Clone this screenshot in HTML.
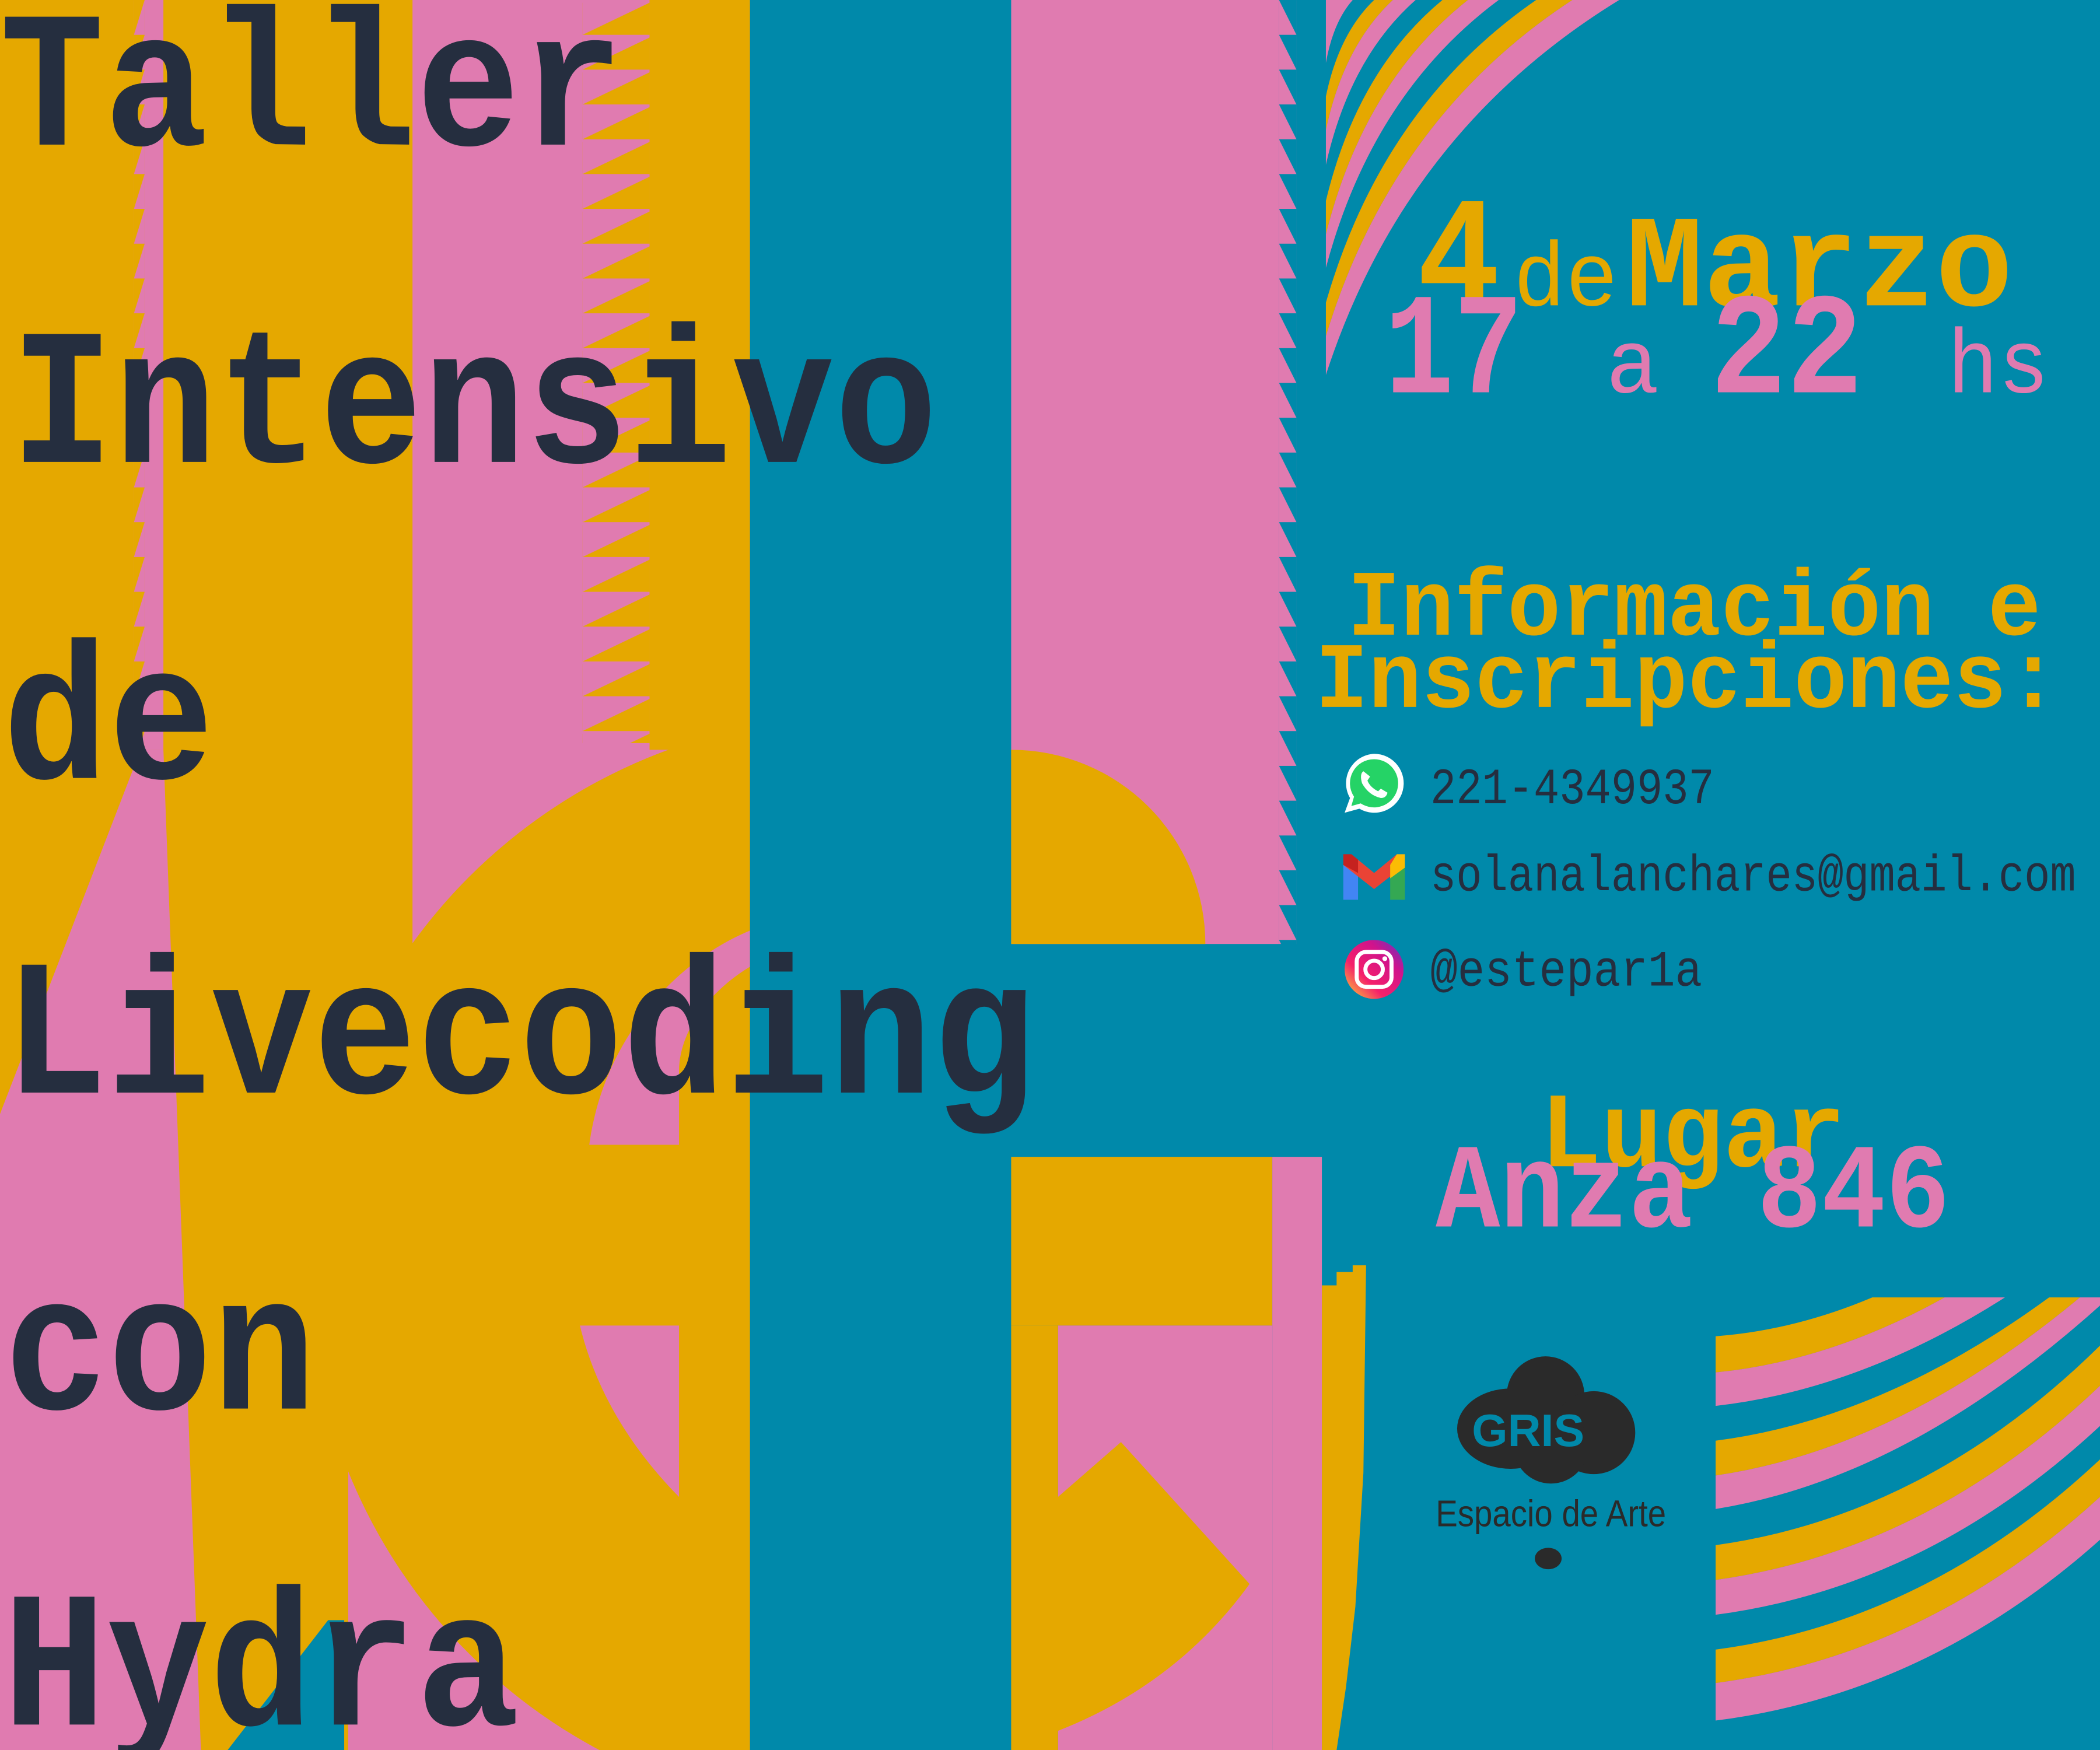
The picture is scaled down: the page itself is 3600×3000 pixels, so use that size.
<!DOCTYPE html>
<html><head><meta charset="utf-8"><style>
html,body{margin:0;padding:0;background:#0089aa;}
svg{display:block;}
text{font-family:"Liberation Mono",monospace;}
</style></head><body>
<svg width="3600" height="3000" viewBox="0 0 1568 1307" preserveAspectRatio="none" xmlns="http://www.w3.org/2000/svg">
<defs>
<pattern id="tY" x="435" y="0" width="50" height="26" patternUnits="userSpaceOnUse"><polygon points="50,2 0,26 50,26" fill="#e5a800"/></pattern>
<pattern id="tP" x="955" y="0" width="13" height="26" patternUnits="userSpaceOnUse"><polygon points="0,0 13,26 0,26" fill="#e07bb0"/></pattern>
<pattern id="tL" x="100" y="0" width="8" height="26" patternUnits="userSpaceOnUse"><polygon points="8,0 0,26 8,26" fill="#e07bb0"/></pattern>
<clipPath id="cl"><rect x="0" y="0" width="560" height="1307"/></clipPath>
<linearGradient id="ig" x1="0" y1="1" x2="1" y2="0"><stop offset="0" stop-color="#fdd835"/><stop offset="0.35" stop-color="#f5206a"/><stop offset="0.7" stop-color="#d0138c"/><stop offset="1" stop-color="#5b3ac7"/></linearGradient>
</defs>
<rect x="0" y="0" width="1568" height="1307" fill="#0089aa"/>
<rect x="0" y="0" width="560" height="1307" fill="#e5a800"/>
<rect x="308" y="0" width="252" height="760" fill="#e07bb0"/>
<rect x="435" y="0" width="50" height="555" fill="url(#tY)"/>
<rect x="485" y="0" width="75" height="560" fill="#e5a800"/>
<rect x="108" y="0" width="14" height="560" fill="#e07bb0"/>
<rect x="100" y="0" width="8" height="560" fill="url(#tL)"/>
<polygon points="105,560 122,560 150,1307 0,1307 0,832" fill="#e07bb0"/>
<rect x="260" y="1000" width="300" height="307" fill="#e07bb0"/>
<g clip-path="url(#cl)">
<circle cx="640" cy="945" r="410" fill="#e5a800"/>
</g>
<path d="M433,990 L507,990 L507,1118 Q450,1060 433,990 Z" fill="#e07bb0"/>
<path d="M440,855 C450,780 500,720 560,695 L560,722 C530,740 507,770 507,800 L507,855 Z" fill="#e07bb0"/>
<polygon points="170,1307 245,1210 257,1210 257,1307" fill="#0089aa"/>
<rect x="560" y="0" width="195" height="1307" fill="#0089aa"/>
<rect x="755" y="0" width="200" height="705" fill="#e07bb0"/>
<rect x="955" y="0" width="13" height="705" fill="url(#tP)"/>
<path d="M755,560 A145,145 0 0 1 900,705 L755,705 Z" fill="#e5a800"/>
<rect x="755" y="864" width="195" height="126" fill="#e5a800"/>
<rect x="950" y="864" width="37" height="443" fill="#e07bb0"/>
<rect x="790" y="990" width="160" height="317" fill="#e07bb0"/>
<rect x="755" y="990" width="35" height="317" fill="#e5a800"/>
<path d="M790,1118 L837,1077 L933,1183 Q870,1270 760,1303 L760,1118 Z" fill="#e5a800"/>
<polygon points="987,960 998,960 998,950 1010,950 1010,945 1020,945 1018,1100 1012,1200 1005,1260 998,1307 987,1307" fill="#e5a800"/>
<path d="M990,0 L1010,0 Q995.4,16.5 990,47 Z" fill="#e07bb0"/>
<path d="M1026,0 L1040,0 Q1003.5,34 990,97 L990,72 Q999.7,25.2 1026,0 Z" fill="#e5a800"/>
<path d="M1040,0 L1057,0 Q1008.1,43 990,123 L990,97 Q1003.5,34 1040,0 Z" fill="#e07bb0"/>
<path d="M1077,0 L1096,0 Q1018.6,61.3 990,175 L990,150 Q1013.5,52.5 1077,0 Z" fill="#e5a800"/>
<path d="M1096,0 L1119,0 Q1024.8,70 990,200 L990,175 Q1018.6,61.3 1096,0 Z" fill="#e07bb0"/>
<path d="M1147,0 L1174,0 Q1039.7,87.9 990,251 L990,226 Q1032.4,79.1 1147,0 Z" fill="#e5a800"/>
<path d="M1174,0 L1209,0 Q1049.1,98 990,280 L990,251 Q1039.7,87.9 1174,0 Z" fill="#e07bb0"/>
<path d="M1281,998 Q1339.5,993.6 1398,969 L1452,969 Q1366.5,1016.6 1281,1025 Z" fill="#e5a800"/>
<path d="M1281,1025 Q1366.5,1016.6 1452,969 L1497,969 Q1389,1037.8 1281,1050 Z" fill="#e07bb0"/>
<path d="M1281,1076 Q1405.5,1060 1530,969 L1553,969 Q1417,1082 1281,1102 Z" fill="#e5a800"/>
<path d="M1281,1102 Q1417,1082 1553,969 L1568,969 L1568,975 Q1424.5,1104 1281,1127 Z" fill="#e07bb0"/>
<path d="M1281,1154 Q1439,1132 1568,1005 L1568,1035 Q1439,1158 1281,1180 Z" fill="#e5a800"/>
<path d="M1281,1180 Q1439,1158 1568,1035 L1568,1065 Q1439,1185 1281,1206 Z" fill="#e07bb0"/>
<path d="M1281,1232 Q1439,1211 1568,1090 L1568,1118 Q1439,1236 1281,1257 Z" fill="#e5a800"/>
<path d="M1281,1257 Q1439,1236 1568,1118 L1568,1150 Q1439,1265 1281,1285 Z" fill="#e07bb0"/>
<g fill="#252e3f" font-weight="bold" font-size="145">
<text x="0" y="108" textLength="466" lengthAdjust="spacingAndGlyphs">Taller</text>
<text x="8" y="345" textLength="692" lengthAdjust="spacingAndGlyphs">Intensivo</text>
<text x="2" y="581" textLength="158" lengthAdjust="spacingAndGlyphs">de</text>
<text x="3" y="816" textLength="770" lengthAdjust="spacingAndGlyphs">Livecoding</text>
<text x="3" y="1052" textLength="233" lengthAdjust="spacingAndGlyphs">con</text>
<text x="2" y="1288" textLength="386" lengthAdjust="spacingAndGlyphs">Hydra</text>
</g>
<g fill="#e5a800">
<text x="1058" y="228" font-size="118" font-weight="bold" textLength="62" lengthAdjust="spacingAndGlyphs">4</text>
<text x="1130" y="228" font-size="68" textLength="78" lengthAdjust="spacingAndGlyphs">de</text>
<text x="1214" y="228" font-size="98" font-weight="bold" textLength="289" lengthAdjust="spacingAndGlyphs">Marzo</text>
</g>
<g fill="#e07bb0">
<text x="1034" y="293" font-size="108" font-weight="bold" textLength="103" lengthAdjust="spacingAndGlyphs">17</text>
<text x="1199" y="293" font-size="68" textLength="40" lengthAdjust="spacingAndGlyphs">a</text>
<text x="1277" y="293" font-size="108" font-weight="bold" textLength="114" lengthAdjust="spacingAndGlyphs">22</text>
<text x="1454" y="293" font-size="68" textLength="76" lengthAdjust="spacingAndGlyphs">hs</text>
</g>
<g fill="#e5a800" font-weight="bold" font-size="70">
<text x="1006" y="474" textLength="518" lengthAdjust="spacingAndGlyphs">Información e</text>
<text x="982" y="528" textLength="556" lengthAdjust="spacingAndGlyphs">Inscripciones:</text>
</g>
<g fill="#252e3f" font-size="38">
<text x="1068" y="600" textLength="212" lengthAdjust="spacingAndGlyphs">221-4349937</text>
<text x="1068" y="665" textLength="482" lengthAdjust="spacingAndGlyphs">solanalanchares@gmail.com</text>
<text x="1068" y="736" textLength="203" lengthAdjust="spacingAndGlyphs">@estepar1a</text>
</g>
<path d="M1026,563 A22,22 0 1 1 1015,604 L1004,607 L1008,596 A22,22 0 0 1 1026,563 Z" fill="#fff"/>
<path d="M1026,567 A18,18 0 1 1 1016,600 L1009,602 L1011,595 A18,18 0 0 1 1026,567 Z" fill="#25d366"/>
<path d="M1018,576 Q1015,578 1017,585 Q1022,594 1031,596 Q1035,596 1036,592 L1031,589 L1029,591 Q1023,588 1021,583 L1023,580 Z" fill="#fff"/>
<rect x="1003" y="646" width="11" height="26" fill="#4285f4"/>
<rect x="1038" y="646" width="11" height="26" fill="#34a853"/>
<polygon points="1003,646 1009,638 1026,652 1043,638 1049,646 1026,664" fill="#ea4335"/>
<polygon points="1038,646 1043,638 1049,638 1049,648 1038,656" fill="#fbbc04"/>
<polygon points="1003,638 1009,638 1014,642 1014,652 1003,646" fill="#c5221f"/>
<circle cx="1026" cy="724" r="22" fill="url(#ig)"/>
<rect x="1013" y="711" width="26" height="26" rx="7" fill="none" stroke="#fff" stroke-width="3"/>
<circle cx="1026" cy="724" r="6.5" fill="none" stroke="#fff" stroke-width="3"/>
<circle cx="1034" cy="716" r="1.8" fill="#fff"/>
<text x="1150" y="871" font-size="80" font-weight="bold" fill="#e5a800" textLength="228" lengthAdjust="spacingAndGlyphs">Lugar</text>
<text x="1072" y="916" font-size="90" font-weight="bold" fill="#e07bb0" textLength="384" lengthAdjust="spacingAndGlyphs">Anza 846</text>
<g fill="#2a2a2a">
<ellipse cx="1128" cy="1067" rx="40" ry="30"/>
<circle cx="1154" cy="1042" r="29"/>
<circle cx="1190" cy="1070" r="31"/>
<circle cx="1158" cy="1080" r="28"/>
<ellipse cx="1156" cy="1164" rx="10" ry="8"/>
</g>
<text x="1099" y="1080" font-weight="bold" font-size="34" fill="#0089aa" textLength="84" lengthAdjust="spacingAndGlyphs" style="font-family:'Liberation Sans',sans-serif">GRIS</text>
<text x="1072" y="1140" font-size="28" fill="#2a2a2a" textLength="172" lengthAdjust="spacingAndGlyphs" style="font-family:'Liberation Sans',sans-serif">Espacio de Arte</text>
</svg>
</body></html>
